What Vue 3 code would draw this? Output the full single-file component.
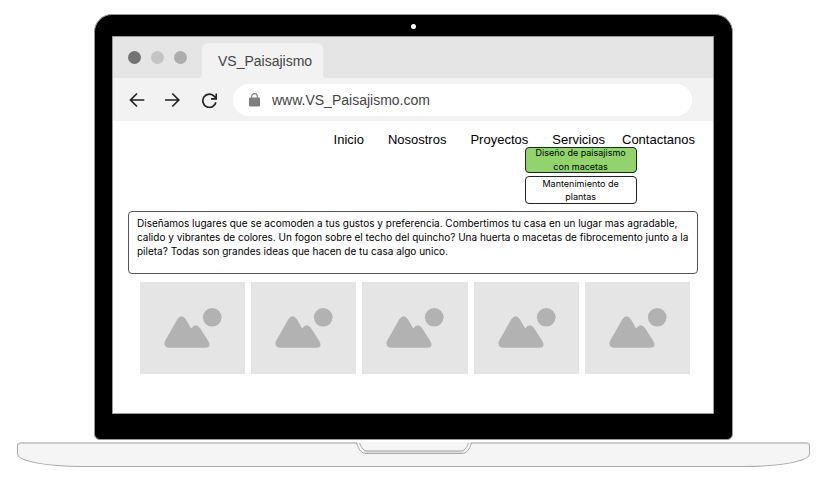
<script setup>
import { ref } from 'vue'

const address = ref('www.VS_Paisajismo.com')
const links = ['Inicio', 'Nosostros', 'Proyectos', 'Servicios', 'Contactanos']
const services = [
  { lines: ['Diseño de paisajismo', 'con macetas'], active: true },
  { lines: ['Mantenimiento de', 'plantas'], active: false },
]
const paragraph = [
  'Diseñamos lugares que se acomoden a tus gustos y preferencia. Combertimos tu casa en un lugar mas agradable,',
  'calido y vibrantes de colores. Un fogon sobre el techo del quincho? Una huerta o macetas de fibrocemento junto a la',
  'pileta? Todas son grandes ideas que hacen de tu casa algo unico.',
]
</script>

<template>
  <div class="laptop">
    <div class="lid">
      <div class="camera-row"><span class="camera"></span></div>
      <div class="screen">
        <header class="tab-bar">
          <span class="dot dark"></span>
          <span class="dot light"></span>
          <span class="dot mid"></span>
          <div class="tab">
            VS_Paisajismo
            <svg class="flare left" width="4" height="4" viewBox="0 0 4 4" aria-hidden="true"><path d="M4 0v4H0Q4 4 4 0Z" /></svg>
            <svg class="flare right" width="4" height="4" viewBox="0 0 4 4" aria-hidden="true"><path d="M0 0v4h4Q0 4 0 0Z" /></svg>
          </div>
        </header>
        <div class="toolbar">
          <button type="button" aria-label="Atrás">
            <svg width="16" height="16" viewBox="0 0 16 16"><path d="M15.3 8H2M8 1.5 1.5 8 8 14.5" /></svg>
          </button>
          <button type="button" aria-label="Adelante">
            <svg width="16" height="16" viewBox="0 0 16 16"><path d="M0 8h13M7.300 1.500 13.800 8 7.300 14.500" /></svg>
          </button>
          <button type="button" aria-label="Recargar">
            <svg width="16" height="16" viewBox="0 0 16 16"><path d="M14.9 10.2A6.6 6.6 0 1 1 13.4 4.400L15 6M15.300 1.600v5.200H10" /></svg>
          </button>
          <label class="address">
            <svg width="11" height="14" viewBox="0 0 11 14" aria-hidden="true">
              <path class="shackle" d="M2.7 6V3.4a2.8 2.8 0 0 1 5.6 0V6" />
              <rect x="0" y="4.5" width="11" height="9" rx="1.2" />
            </svg>
            <input v-model="address" type="text" aria-label="Dirección" />
          </label>
        </div>
        <main>
          <nav>
            <ul class="menu">
              <li v-for="link in links" :key="link">
                <a href="#">{{ link }}</a>
                <ul v-if="link === 'Servicios'" class="submenu">
                  <li v-for="s in services" :key="s.lines[0]">
                    <a href="#" :class="{ active: s.active }"><span v-for="l in s.lines" :key="l">{{ l }}</span></a>
                  </li>
                </ul>
              </li>
            </ul>
          </nav>
          <p class="intro"><span v-for="l in paragraph" :key="l">{{ l }}</span></p>
          <div class="gallery">
            <div v-for="n in 5" :key="n" class="tile">
              <svg width="58" height="42" viewBox="0 0 58 42" aria-hidden="true">
                <circle cx="48.2" cy="10.3" r="9.3" />
                <path d="M1 34 13.2 12.4Q17.6 6 22 12.4L27.2 21.6Q31.8 15 36 21L44.6 34.6Q47.4 40.4 41.4 40.8H6.2Q-1.4 40.2 1 34Z" />
              </svg>
            </div>
          </div>
        </main>
      </div>
    </div>
    <div class="base">
      <svg width="118" height="13" viewBox="0 0 118 13" aria-hidden="true">
        <path class="gap" d="M2 0H116Q113 10.5 106 10.5H12Q5 10.5 2 0Z" />
        <path class="shade" d="M8 8.5H110L107 11.5H11Z" />
        <path class="edge" d="M1.5 1Q4.5 11.5 11 11.5H107Q113.5 11.5 116.5 1" />
        <path class="edge" d="M4.5 1Q7.5 9 12 9H106Q110.5 9 113.5 1" />
      </svg>
    </div>
  </div>
</template>

<style>
body {
  background: #fff;
}
</style>

<style scoped>
.laptop {
  padding: 14px 18px 12px 17px;
  font-family: "Liberation Sans", Arial, sans-serif;
  color: #000;
}
.laptop *,
.laptop {
  box-sizing: border-box;
}
ul {
  list-style: none;
  margin: 0;
  padding: 0;
}
.lid {
  margin: 0 77px;
  padding: 0 18px 25px 17px;
  background: #000;
  border: 1px solid #999;
  border-radius: 18px 18px 6px 6px;
}
.camera-row {
  display: flex;
  justify-content: center;
  align-items: center;
  height: 21px;
  padding-top: 2px;
}
.camera {
  width: 5px;
  height: 5px;
  border-radius: 50%;
  background: #fff;
}
.screen {
  background: #fff;
  border: 1px solid #999;
}
.tab-bar {
  display: flex;
  align-items: center;
  gap: 10px;
  height: 41px;
  padding-left: 15px;
  background: #e5e5e5;
}
.dot {
  width: 13px;
  height: 13px;
  border-radius: 50%;
}
.dark { background: #737373; }
.light { background: #c4c4c4; }
.mid { background: #adadad; }
.tab {
  position: relative;
  align-self: flex-end;
  width: 121px;
  height: 35px;
  margin-left: 5px;
  padding-left: 16px;
  border-radius: 6px 6px 0 0;
  background: #f2f2f2;
  color: #444;
  font-size: 14px;
  line-height: 36px;
}
.flare {
  position: absolute;
  bottom: 0;
  fill: #f2f2f2;
}
.flare.left { right: 100%; }
.flare.right { left: 100%; }
.toolbar {
  display: flex;
  align-items: center;
  height: 43px;
  padding: 0 21px 0 16px;
  background: #f2f2f2;
}
button {
  display: flex;
  width: 16px;
  margin-right: 20px;
  padding: 0;
  border: 0;
  background: none;
}
button path {
  fill: none;
  stroke: #222;
  stroke-width: 1.7;
}
.address {
  display: flex;
  flex: 1;
  align-items: center;
  gap: 12px;
  height: 32px;
  margin-left: -4px;
  padding: 0 16px;
  border-radius: 16px;
  background: #fff;
  fill: #808080;
}
.shackle {
  fill: none;
  stroke: #808080;
  stroke-width: 1.2;
}
input {
  flex: 1;
  min-width: 0;
  padding: 0;
  border: 0;
  outline: 0;
  background: none;
  color: #444;
  font: 14px/18px "Liberation Sans", Arial, sans-serif;
}
main {
  padding: 11px 15px 39px;
}
.menu {
  display: flex;
  justify-content: flex-end;
  gap: 24px;
  padding-right: 3px;
  font-size: 13px;
  line-height: 16px;
}
.menu > li {
  position: relative;
}
.menu > li:last-child {
  margin-left: -7px;
}
a {
  color: inherit;
  text-decoration: none;
}
.submenu {
  position: absolute;
  top: 15px;
  left: 50%;
  width: 112px;
  margin-left: -54px;
  font-family: Inter, "Liberation Sans", sans-serif;
  font-size: 9px;
  text-align: center;
}
.submenu a {
  display: flex;
  flex-direction: column;
  justify-content: center;
  height: 28px;
  border: 1px solid #222;
  border-radius: 4px;
  line-height: 13px;
}
.submenu .active {
  height: 26px;
  margin-bottom: 3px;
  background: #92d36e;
  line-height: 14px;
}
.intro {
  min-height: 63px;
  margin: 63px 0 0;
  padding: 4px 8px;
  border: 1px solid #555;
  border-radius: 4px;
  font-family: Inter, "Liberation Sans", sans-serif;
  font-size: 10px;
  line-height: 14px;
}
.intro span {
  display: block;
  white-space: nowrap;
}
.gallery {
  display: grid;
  grid-template-columns: repeat(5, 1fr);
  gap: 6px;
  margin: 8px 8px 0 12px;
}
.tile {
  height: 92px;
  padding: 25px 0 0 24px;
  background: #e5e5e5;
  fill: #b2b2b2;
}
.tile svg {
  display: block;
}
.base {
  display: flex;
  justify-content: center;
  height: 25px;
  margin-top: 2px;
  background: #f5f5f5;
  border: 1px solid #aaa;
  border-top: 2px solid #ccc;
  border-radius: 4px 4px 64px 64px / 4px 4px 13px 13px;
}
.base svg {
  margin-top: -2px;
}
.gap { fill: #f5f5f5; }
.shade { fill: #ddd; }
.edge {
  fill: none;
  stroke: #aaa;
  stroke-width: 1;
}
</style>
